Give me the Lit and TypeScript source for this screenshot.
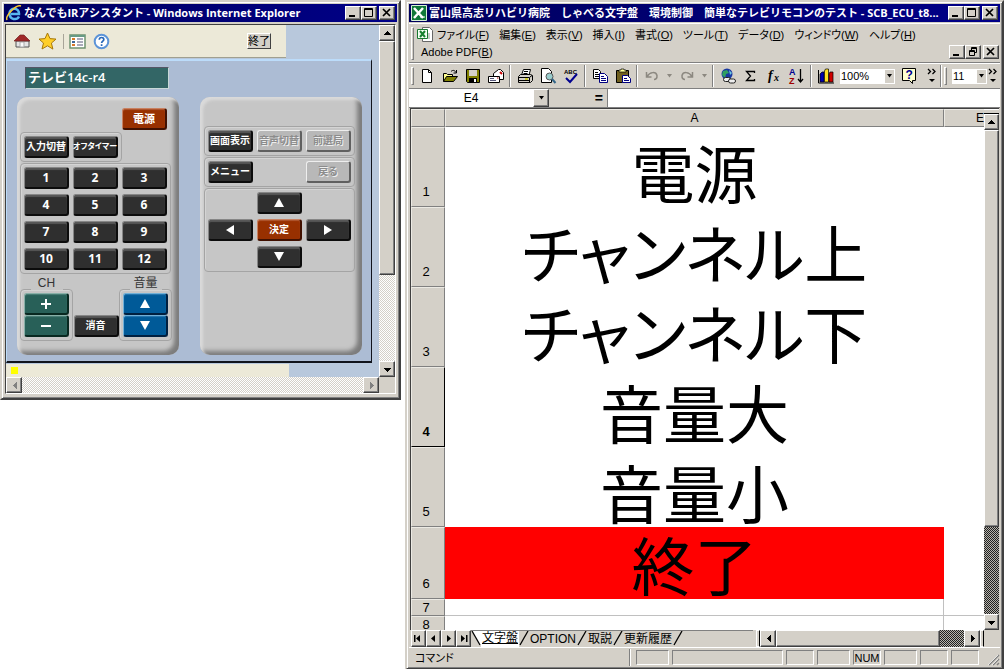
import { LitElement, html, css, svg, nothing } from "lit";
import { customElement, property } from "lit/decorators.js";
import { classMap } from "lit/directives/class-map.js";

const base = css`
  *, *::before, *::after { box-sizing: border-box; }
  button, input, select {
    font: inherit; color: inherit; margin: 0; padding: 0; border: 0;
    border-radius: 0; background: none; appearance: none; min-width: 0;
  }
  svg { display: block; flex: none; overflow: visible; }
  .raised {
    background: #d4d0c8; border: 1px solid; border-color: #fff #404040 #404040 #fff;
    box-shadow: inset -1px -1px #808080;
    display: flex; align-items: center; justify-content: center;
  }
`;

const arrow = (dir: string, color = "#000") => {
  const shapes: Record<string, string> = {
    up: "M4 2h1v1h1v1h1v1h1v1H1V5h1V4h1V3h1z",
    down: "M1 3h7v1H7v1H6v1H5v1H4V6H3V5H2V4H1z",
    left: "M3 4h1V3h1V2h1V1h1v7H6V7H5V6H4V5H3z",
    right: "M3 1h1v1h1v1h1v1h1v1H6v1H5v1H4v1H3z",
  };
  return html`<svg width="9" height="9" viewBox="0 0 9 9" shape-rendering="crispEdges"><path fill=${color} d=${shapes[dir]}/></svg>`;
};

/* ---------- window frame ---------- */
@customElement("classic-window")
class ClassicWindow extends LitElement {
  @property() heading = "";
  static styles = [base, css`
    :host {
      display: flex; flex-direction: column; min-width: 0; padding: 2px;
      background: #d4d0c8; border: 2px solid; border-color: #d4d0c8 #404040 #404040 #d4d0c8;
      box-shadow: inset 1px 1px #fff, inset -1px -1px #808080;
    }
    .bar {
      display: flex; align-items: center; height: 18px; padding: 0 2px; gap: 2px; flex: none;
      background: linear-gradient(90deg, #00005e, #000088); color: #fff;
    }
    .title {
      flex: 1; margin: 0; font: bold 11px/18px "Open Sans", "Noto Sans CJK JP", sans-serif;
      white-space: nowrap; overflow: hidden; text-overflow: ellipsis;
    }
    .controls { display: flex; }
    .controls button { width: 16px; height: 14px; }
    .controls .close { margin-left: 2px; }
    .body { flex: 1; display: flex; flex-direction: column; min-height: 0; margin-top: 1px; }
  `];
  render() {
    const s = (d: string) => html`<svg width="10" height="10" viewBox="0 0 10 10" fill="none" stroke="#000" stroke-width="2"><path d=${d}/></svg>`;
    return html`
      <div class="bar">
        <slot name="icon"></slot>
        <h1 class="title">${this.heading}</h1>
        <div class="controls">
          <button class="raised" aria-label="最小化">${s("M1 8h6")}</button>
          <button class="raised" aria-label="最大化"><svg width="10" height="10" viewBox="0 0 10 10" fill="none" stroke="#000"><path d="M.5 .5h8v8h-8zM.5 1.5h8"/></svg></button>
          <button class="raised close" aria-label="閉じる"><svg width="10" height="10" viewBox="0 0 10 10" fill="none" stroke="#000" stroke-width="1.7"><path d="M1 1l7 7M8 1l-7 7"/></svg></button>
        </div>
      </div>
      <div class="body"><slot></slot></div>`;
  }
}

/* ---------- scroll bar ---------- */
@customElement("scroll-bar")
class ScrollBar extends LitElement {
  @property({ type: Boolean, reflect: true }) horizontal = false;
  @property({ type: Boolean, reflect: true }) dark = false;
  @property({ type: Boolean }) disabled = false;
  @property({ type: Number }) thumb = 0;
  static styles = [base, css`
    :host { display: flex; flex-direction: column; width: 16px; flex: none; --a: #fff; --b: #d4d0c8; }
    :host([horizontal]) { flex-direction: row; width: auto; height: 16px; }
    :host([dark]) { --a: #b8b4ac; --b: #202020; }
    button { width: 100%; height: 16px; flex: none; }
    :host([horizontal]) button { width: 16px; height: 100%; }
    .track {
      flex: 1; display: flex; flex-direction: inherit; min-width: 0; min-height: 0;
      background: repeating-conic-gradient(var(--a) 0 25%, var(--b) 0 50%) 0 0 / 2px 2px;
    }
  `];
  render() {
    const color = this.disabled ? "#808080" : "#000";
    const [a, b] = this.horizontal ? ["left", "right"] : ["up", "down"];
    return html`
      <button class="raised" aria-label="戻る方向">${arrow(a, color)}</button>
      <div class="track">${this.thumb ? html`<div class="raised" style="flex: 0 0 ${this.thumb}%"></div>` : nothing}</div>
      <button class="raised" aria-label="進む方向">${arrow(b, color)}</button>`;
  }
}

/* ---------- remote control page ---------- */
@customElement("remote-control")
class RemoteControl extends LitElement {
  static styles = [base, css`
    :host {
      display: flex; flex-direction: column; flex: 1; margin: 1px 1px 2px;
      border: 1px solid; border-color: #404040 #fff #fff #404040;
      font-family: "Liberation Sans", "Noto Sans CJK JP", sans-serif; color: #fff;
    }
    .view { display: flex; }
    .page { flex: 1; background: #b8c8dc; min-width: 0; }
    .tools {
      display: flex; align-items: center; width: 280px; max-width: 100%; height: 33px; padding: 0 15px 0 7px; gap: 7px;
      background: #ece9d8; border-bottom: 1px solid #a0a090;
    }
    .tools button { display: flex; }
    .rule { width: 1px; height: 15px; background: #a8a498; margin: 0 -2px 0 -1px; }
    .tools .quit {
      margin-left: auto; width: 24px; height: 16px; background: #d4d0c8; color: #000; justify-content: center;
      border: 1px solid; border-color: #fff #404040 #404040 #fff; font-size: 11px; line-height: 14px;
    }
    .deck {
      margin: 1px 7px 1px 0; padding: 6px 9px 6px 10px; background: #acbcd4;
      border: 2px solid; border-width: 2px 1px 2px 1px; border-color: #bcdcfa #10141c #10141c #bcdcfa;
    }
    .lcd {
      display: block; width: 144px; height: 22px; margin: 0 0 8px 8px; padding-left: 2px; background: #336666;
      border: 1px solid #556; border-right-color: #c8d8d8; border-bottom-color: #c8d8d8;
      font: 600 13px/19px "Open Sans", "Noto Sans CJK JP", sans-serif;
    }
    .panels { display: flex; justify-content: space-between; }
    .panel {
      width: 162px; height: 258px; padding: 11px 7px 0 3px; border-radius: 10px; background: #c6c6c6;
      box-shadow: inset 3px 3px 3px #dadada, inset -5px -4px 4px #7c7c7c;
      display: flex; flex-direction: column; align-items: flex-start;
    }
    .panel.nav { padding-top: 29px; padding-left: 4px; }
    .box {
      display: grid; grid-template-columns: repeat(3, 45px); gap: 5px 4px; padding: 3px;
      border: 1px solid #a4a4a4; border-radius: 4px; box-shadow: inset 1px 1px #d4d4d4; margin-bottom: 1px;
    }
    .box.two { grid-template-columns: repeat(2, 45px); }
    .box.one { grid-template-columns: 45px; gap: 0; margin: 0; }
    .key {
      height: 22px; border-radius: 3px; background: #2f2f2f; font-weight: bold; font-size: 10px; line-height: 18px;
      border: 1px solid #222; border-width: 1px 2px 2px 1px; border-color: #868686 #0c0c0c #0c0c0c #868686;
      box-shadow: inset 0 2px 1px #585858; white-space: nowrap; width: 45px;
      display: flex; align-items: center; justify-content: center;
    }
    .digit { font: bold 12px/18px "Noto Sans", sans-serif; }
    .tiny { font-size: 8px; font-feature-settings: "palt"; }
    .red { background: #983000; border-color: #c88060 #401000 #401000 #c88060; box-shadow: inset 0 1px 1px #b05830; }
    .power { margin: 0 0 2px 102px; font-size: 11px; }
    .green { background: #286058; border-color: #88b0a8 #082820 #082820 #88b0a8; box-shadow: inset 0 1px 1px #4c8078; }
    .blue { background: #005a98; border-color: #70b0d8 #002040 #002040 #70b0d8; box-shadow: inset 0 1px 1px #2878b0; }
    .key:disabled {
      background: #b8b8b8; color: #8c8c8c; text-shadow: 1px 1px #eee;
      border-color: #eee #606060 #606060 #eee; box-shadow: none;
    }
    .col1 { grid-column: 1; } .col2 { grid-column: 2; } .col3 { grid-column: 3; }
    .bottom { display: flex; align-items: flex-end; justify-content: space-between; align-self: stretch; margin-top: 1px; }
    .bottom > .key { margin-bottom: 4px; margin-inline: -3px; }
    .caption {
      width: 32px; margin: 0 auto -1px; background: #c6c6c6; color: #333; text-align: center;
      font-size: 12px; line-height: 14px; position: relative;
    }
    .foot { width: 76%; height: 13px; background: #ece9d8; padding: 3px 5px; }
    .lamp { width: 7px; height: 7px; background: #ff0; }
    .base { display: flex; background: #d4d0c8; }
    .base scroll-bar { flex: 1; }
    .corner { width: 16px; }
  `];
  render() {
    const key = (label: unknown, cls = "", disabled = false, name = "") =>
      html`<button class="key ${cls}" ?disabled=${disabled} aria-label=${name || nothing}>${label}</button>`;
    const tri = (d: string) => svg`<svg width="12" height="11" viewBox="0 0 12 11" fill="#fff"><path d=${d}/></svg>`;
    const up = tri("M6 1l5 9H1z"), down = tri("M6 10l5-9H1z");
    const left = tri("M2 6l8-5v10z"), right = tri("M10 6L2 1v10z");
    return html`
      <div class="view">
        <div class="page">
          <div class="tools">
            <button aria-label="ホーム"><svg width="18" height="18" viewBox="0 0 18 18"><path d="M3 9h13v6H3z" fill="#e4e4e4" stroke="#555"/><path d="M7 10h4v5H7z" fill="#fafafa" stroke="#aaa"/><path d="M1 9l6-6h4l6 6z" fill="#a02828" stroke="#702020" stroke-width=".7"/></svg></button>
            <button aria-label="お気に入り"><svg width="19" height="18" viewBox="0 0 19 18"><path d="M9.5 1l2.5 5.6 6 .5-4.6 4 1.5 6-5.4-3.3L4 17l1.500-6L1 7.100l6-.5z" fill="#ffcf28" stroke="#a87808"/></svg></button>
            <span class="rule"></span>
            <button aria-label="一覧"><svg width="17" height="16" viewBox="0 0 17 16"><path d="M1 2h15v13H1z" fill="#fff" stroke="#6f9270" stroke-width="1.500"/><path d="M1 2h15v2H1z" fill="#699a85"/><path d="M3 6h3M3 12h3" stroke="#d87828" stroke-width="2"/><path d="M3 9h3" stroke="#406898" stroke-width="2"/><path d="M8 6h6M8 9h6M8 12h6" stroke="#557"/></svg></button>
            <button aria-label="ヘルプ"><svg width="17" height="17" viewBox="0 0 17 17"><circle cx="8.500" cy="8.500" r="6.800" fill="#fff" stroke="#5c94d8" stroke-width="2"/><path d="M6.300 6.700c0-3 4.600-2.800 4.500-.2 0 1.600-2.200 1.800-2.200 3.600M8.600 11.200v1.700" fill="none" stroke="#2868b8" stroke-width="1.700"/></svg></button>
            <button class="quit">終了</button>
          </div>
          <div class="deck">
            <output class="lcd">テレビ14c-r4</output>
            <div class="panels">
              <div class="panel">
                ${key("電源", "red power")}
                <div class="box two">${key("入力切替")}${key("オフタイマー", "tiny")}</div>
                <div class="box">${Array.from({ length: 12 }, (_, i) => key(i + 1, "digit"))}</div>
                <div class="bottom">
                  <div><div class="caption">CH</div><div class="box one">
                    ${key(svg`<svg width="12" height="12" viewBox="0 0 12 12" stroke="#fff" stroke-width="2"><path d="M6 1v10M1 6h10"/></svg>`, "green", false, "チャンネル上")}
                    ${key(svg`<svg width="12" height="12" viewBox="0 0 12 12" stroke="#fff" stroke-width="2"><path d="M1 6h10"/></svg>`, "green", false, "チャンネル下")}
                  </div></div>
                  ${key("消音")}
                  <div><div class="caption">音量</div><div class="box one">
                    ${key(up, "blue", false, "音量大")}${key(down, "blue", false, "音量小")}
                  </div></div>
                </div>
              </div>
              <div class="panel nav">
                <div class="box">${key("画面表示")}${key("音声切替", "", true)}${key("前選局", "", true)}</div>
                <div class="box">${key("メニュー", "col1")}${key("戻る", "col3", true)}</div>
                <div class="box">
                  ${key(up, "col2", false, "上")}
                  ${key(left, "col1", false, "左")}${key("決定", "red")}${key(right, "", false, "右")}
                  ${key(down, "col2", false, "下")}
                </div>
              </div>
            </div>
          </div>
          <div class="foot"><div class="lamp"></div></div>
        </div>
        <scroll-bar .thumb=${73}></scroll-bar>
      </div>
      <div class="base"><scroll-bar horizontal disabled></scroll-bar><span class="corner"></span></div>`;
  }
}

/* ---------- spreadsheet ---------- */
const I = (body: unknown, w = 16) => html`<svg width=${w} height="16" viewBox="0 0 ${w} 16">${body}</svg>`;
const icons = {
  blank: svg`<path d="M3.500 1.500h6l3 3v10h-9z" fill="#fff" stroke="#000"/><path d="M9.500 1.500v3h3" fill="none" stroke="#000"/>`,
  open: svg`<path d="M1.500 13.500v-8h3l1 1h5v2" fill="#ffff90" stroke="#000"/><path d="M1.500 13.500l3-5h11l-4 5z" fill="#808000" stroke="#000"/><path d="M9 3.500c2-2 4-1 5 1M14.500 2v3h-3" fill="none" stroke="#000"/>`,
  save: svg`<path d="M1.500 1.500h13v13h-12l-1-1z" fill="#808000" stroke="#000"/><path d="M4 2h8v6H4z" fill="#d4d0c8"/><path d="M4 10h8v5H4z" fill="#000"/><path d="M9 11h2v3H9z" fill="#fff"/>`,
  mail: svg`<path d="M5.500 5.500l5-4h2l3 3v7h-10z" fill="#fff" stroke="#000"/><path d="M12 4l2 2" stroke="#c00" stroke-width="2"/><path d="M.5 8.500h11v6H.5z" fill="#fff" stroke="#000"/><path d="M2 10.500h4M2 12.500h6" stroke="#557"/><path d="M9 10h1.500" stroke="#a00"/>`,
  print: svg`<path d="M4.500 7l2-5.500h7L12 7" fill="#fff" stroke="#000"/><path d="M7 3.500h4M6.500 5.500h4" stroke="#000"/><path d="M1.500 8.500l2-2h10l2 1v5l-2 2h-12z" fill="#d4d0c8" stroke="#000"/><path d="M1.500 9.500h11v5M2 12.500h10M13 9l2-1.500" fill="none" stroke="#000"/><path d="M8 11h3" stroke="#cc0" stroke-width="1.500"/>`,
  preview: svg`<path d="M1.500.5h7l3 3v11h-10z" fill="#fff" stroke="#000"/><circle cx="9.500" cy="8.500" r="3.500" fill="#9cc" stroke="#555"/><path d="M12 11l3.500 4" stroke="#368" stroke-width="2"/>`,
  spell: svg`<text x="1" y="6" font-size="6" font-weight="bold" font-family="Liberation Sans">ABC</text><path d="M3 10l4 4 7-8" fill="none" stroke="#000090" stroke-width="2"/>`,
  copy: svg`<path d="M1.500 1.500h5l2 2v7h-7z" fill="#fff" stroke="#000"/><path d="M3 4.500h3M3 6.500h4M3 8.500h4" stroke="#000"/><path d="M7.500 5.500h5l3 3v6h-8z" fill="#fff" stroke="#000080"/><path d="M9 8.500h3M9 10.500h5M9 12.500h5" stroke="#000080"/>`,
  paste: svg`<path d="M1.500 2.500h12v12h-12z" fill="#706020" stroke="#000"/><path d="M4 4V2h2V1h3v1h2v2z" fill="#ff9" stroke="#000" stroke-width=".7"/><path d="M7.500 7.500h5l3 3v4h-8z" fill="#fff" stroke="#000080"/><path d="M9 10.500h3M9 12.500h5" stroke="#000080"/>`,
  undo: svg`<path d="M2.500 4v5h5M3 8.500c3-5 9-5 10-1 .3 3-1.500 4-3 4" fill="none" stroke="#8c8880" stroke-width="1.500"/>`,
  redo: svg`<path d="M13.500 4v5h-5M13 8.500c-3-5-9-5-10-1-.3 3 1.500 4 3 4" fill="none" stroke="#8c8880" stroke-width="1.500"/>`,
  globe: svg`<circle cx="7" cy="6" r="5.500" fill="#1838a0"/><path d="M3 3l4-1 2 3-3 1-1 4-3-3z" fill="#30a060"/><path d="M9 2l3 3-2 2z" fill="#70c8e0"/><rect x="3.500" y="9.500" width="7" height="4" rx="2" fill="#eee" stroke="#222"/><rect x="8.500" y="11" width="7" height="4" rx="2" fill="#eee" stroke="#222"/>`,
  sum: svg`<path d="M11.500 5V3.500h-8L7.500 8l-4 4.500h8V11" fill="none" stroke="#000" stroke-width="1.300"/>`,
  fx: svg`<text x="2" y="12" font-size="14" font-weight="bold" font-style="italic" font-family="Liberation Serif">f</text><text x="8" y="13" font-size="10" font-weight="bold" font-style="italic" font-family="Liberation Serif">x</text>`,
  sort: svg`<text x="0" y="7" font-size="9" font-weight="bold" fill="#000090" font-family="Liberation Sans">A</text><text x="0" y="16" font-size="9" font-weight="bold" fill="#a00000" font-family="Liberation Sans">Z</text><path d="M11.500 1v13M9 11l2.500 3 2.500-3" fill="none" stroke="#000" stroke-width="1.300"/>`,
  chart: svg`<path d="M.5 2v13H16" fill="none" stroke="#000"/><path d="M2 6l2-2h2v10H2z" fill="#0000b0" stroke="#000" stroke-width=".7"/><path d="M6.500 3l1-2h3v13h-4z" fill="#ffe020" stroke="#000" stroke-width=".7"/><path d="M11 6l1-2h3v10h-4z" fill="#d00000" stroke="#000" stroke-width=".7"/>`,
  help: svg`<path d="M1.500 .5h13v12h-3v3l-3-3h-7z" fill="#ffffd0" stroke="#000"/><text x="4.500" y="11" font-size="12" font-weight="bold" fill="#000090" font-family="Liberation Sans">?</text>`,
};

const rows = [
  ["1", "電源", 80], ["2", "チャンネル上", 80], ["3", "チャンネル下", 80],
  ["4", "音量大", 80], ["5", "音量小", 80], ["6", "終了", 72], ["7", "", 17], ["8", "", 17],
] as const;

@customElement("spread-sheet")
class SpreadSheet extends LitElement {
  static styles = [base, css`
    :host {
      display: flex; flex-direction: column; flex: 1; min-height: 0; color: #000;
      font: 12px/16px "Liberation Sans", "Noto Sans CJK JP", sans-serif;
    }
    .menu { display: flex; padding: 2px 1px 1px 2px; border-top: 1px solid #fff; border-bottom: 1px solid #808080; height: 40px; }
    .grip { width: 3px; flex: none; border: 1px solid; border-color: #fff #808080 #808080 #fff; margin: 1px 0; }
    .lines { flex: 1; display: flex; flex-direction: column; justify-content: space-between; padding-left: 3px; min-width: 0; }
    .line { display: flex; align-items: center; height: 18px; font-size: 11px; font-feature-settings: "palt"; white-space: nowrap; }
    .items { display: flex; gap: 10px; padding-left: 4px; }
    .doc { margin-left: auto; display: flex; }
    .doc .raised { width: 16px; height: 14px; }
    .doc .raised:last-child { margin-left: 2px; }
    .toolbar { display: flex; align-items: center; height: 26px; padding: 0 1px 0 2px; border-top: 1px solid #fff; border-bottom: 1px solid #808080; }
    .toolbar .grip { align-self: stretch; margin: 3px 1px 3px 0; }
    .tool { width: 23px; height: 22px; display: flex; align-items: center; justify-content: center; flex: none; }
    .drop { width: 12px; display: flex; justify-content: center; flex: none; }
    .sep { width: 2px; height: 22px; margin: 0 2px; border-left: 1px solid #808080; border-right: 1px solid #fff; flex: none; }
    .combo { display: grid; grid-template-columns: 1fr 11px; width: 55px; height: 15px; background: #fff; margin: 0 2px 0 3px; flex: none; font-size: 11px; }
    .combo.small { width: 35px; margin: 0 0 0 4px; }
    .combo select { grid-area: 1 / 1 / 2 / 3; padding-left: 1px; line-height: 15px; }
    .combo span { grid-area: 1 / 2; background: #d4d0c8; border: 1px solid #fff; display: flex; align-items: center; justify-content: center; pointer-events: none; }
    .push { flex: 1; }
    .more { width: 12px; flex: none; display: flex; justify-content: center; }
    .formula { display: flex; height: 19px; border-bottom: 1px solid #808080; }
    .name { width: 124px; text-align: center; background: #fff; }
    .formula .raised { width: 16px; flex: none; }
    .eq { width: 59px; padding-right: 4px; text-align: right; font-weight: bold; line-height: 18px; border-right: 1px solid #808080; font-size: 14px; flex: none; }
    .fx { flex: 1; background: #fff; }
    .work { flex: 1; display: flex; min-height: 0; margin: 0 1px; border: 1px solid #404040; border-width: 1px 0 0 1px; background: #fff; }
    .sheet { flex: 1 1 0; overflow: hidden; min-width: 0; height: 521px; }
    table { table-layout: fixed; border-collapse: separate; border-spacing: 0; width: calc(100% + 32px); }
    th, td { padding: 0; font-weight: normal; }
    th { background: #d4d0c8; border: 1px solid; border-color: #eceae4 #808080 #808080 #eceae4; }
    thead th { height: 18px; line-height: 16px; font-size: 12px; }
    .num { width: 34px; }
    .extra { width: 72px; }
    tbody th { vertical-align: bottom; line-height: 28px; font-size: 13px; padding-right: 4px; }
    tbody th.low { line-height: 15px; }
    tbody .current { font-weight: bold; border-right-color: #000; border-bottom-color: #000; }
    td.big { vertical-align: bottom; text-align: center; font: 400 63px/72px "Noto Sans CJK JP", sans-serif; font-feature-settings: "palt"; white-space: nowrap; }
    .end { background: #f00; }
    td.lined { border-bottom: 1px solid #c0c0c0; }
    td.lined:nth-child(2) { border-right: 1px solid #c0c0c0; }
    .side { display: flex; flex-direction: column; width: 15px; flex: none; background: #d4d0c8; }
    .split { height: 5px; border-top: 1px solid #fff; border-bottom: 1px solid #000; flex: none; }
    .side scroll-bar { flex: 1; width: 15px; }
    .tabs { display: flex; height: 17px; margin-left: 2px; flex: none; }
    .tabs .raised { width: 15px; }
    .strip { flex: 1; display: flex; min-width: 0; border-top: 1px solid #808080; overflow: hidden; margin-right: 3px; }
    .tab { padding: 0 1px; white-space: nowrap; line-height: 15px; font-size: 12px; }
    .tab.active { background: #fff; text-decoration: underline; margin-top: -1px; }
    .hbar { flex: 0 0 228px; display: flex; }
    .hbar scroll-bar { flex: 1; height: auto; }
    .knob { width: 4px; border: 1px solid; border-color: #fff #000 #fff #fff; }
    .corner { width: 16px; flex: none; }
    .status { display: flex; align-items: center; gap: 3px; height: 19px; padding: 1px 0 0 6px; border-top: 1px solid #fff; flex: none; }
    .message { flex: 1; font-size: 11px; font-feature-settings: "palt"; }
    .cell { width: 28px; height: 15px; border: 1px solid; border-color: #808080 #fff #fff #808080; line-height: 14px; text-align: center; flex: none; font-size: 11px; }
    .cell.mid { width: 33px; } .cell.wide { width: 111px; }
    .status .sep { height: 17px; }
  `];
  render() {
    const menus = [["ファイル", "F"], ["編集", "E"], ["表示", "V"], ["挿入", "I"], ["書式", "O"], ["ツール", "T"], ["データ", "D"], ["ウィンドウ", "W"], ["ヘルプ", "H"]];
    const menuItem = ([t, k]: string[]) => html`<button>${t}(<u>${k}</u>)</button>`;
    const tool = (n: keyof typeof icons) => html`<button class="tool" aria-label=${n}>${I(icons[n])}</button>`;
    const small = (c = "#000") => html`<svg width="7" height="4" viewBox="0 0 7 4"><path d="M1 0h5L3.500 3.500z" fill=${c}/></svg>`;
    const chevrons = html`<button class="more" aria-label="その他"><svg width="10" height="16" viewBox="0 0 10 16" fill="none" stroke="#000" stroke-width="1.300"><path d="M1 1l2.500 2.500L1 6M5.500 1L8 3.500 5.500 6"/><path d="M2 11h6L5 14z" fill="#000" stroke="none"/></svg></button>`;
    const sep = html`<span class="sep"></span>`;
    const slash = (first = false) => html`<svg width="10" height="15" viewBox="0 0 10 15"><path d=${first ? "M1 0l8 14h1V0z" : "M0 14L8 0H0z"} fill=${first ? "#fff" : "none"}/><path d=${first ? "M1 0l8 14" : "M1 14L9 0"} stroke="#000" stroke-width="1.300"/></svg>`;
    const nav = (d: string) => html`<button class="raised" aria-label="シート移動"><svg width="9" height="9" viewBox="0 0 9 9"><path d=${d}/></svg></button>`;
    return html`
      <div class="menu">
        <span class="grip"></span>
        <div class="lines">
          <div class="line">
            <svg width="16" height="16" viewBox="0 0 16 16"><path d="M5.500.5h7l3 3v11h-10z" fill="#fff" stroke="#666"/><path d="M.5 2.500h10v9H.5z" fill="#f4fff4" stroke="#187830"/><path d="M3 4l5 6M8 4l-5 6" stroke="#188030" stroke-width="2"/><path d="M12 6v6" stroke="#999"/></svg>
            <nav class="items">${menus.map(menuItem)}</nav>
          </div>
          <div class="line">
            <span class="items adobe"><button>Adobe PDF(<u>B</u>)</button></span>
            <span class="doc">
              <button class="raised" aria-label="ブックを最小化"><svg width="10" height="10" viewBox="0 0 10 10"><path d="M1 7h6v2H1z"/></svg></button>
              <button class="raised" aria-label="ブックを元に戻す"><svg width="10" height="10" viewBox="0 0 10 10" fill="none" stroke="#000"><path d="M3.500 3V.5h5v5H7M3 1.500h6M1.500 3.500h5v5h-5zM1 4.500h6"/></svg></button>
              <button class="raised" aria-label="ブックを閉じる"><svg width="10" height="10" viewBox="0 0 10 10" stroke="#000" stroke-width="1.700"><path d="M1 1l7 7M8 1l-7 7"/></svg></button>
            </span>
          </div>
        </div>
      </div>
      <div class="toolbar">
        <span class="grip"></span>
        ${tool("blank")}${tool("open")}${tool("save")}${tool("mail")}${sep}
        ${tool("print")}${tool("preview")}${tool("spell")}${sep}
        ${tool("copy")}${tool("paste")}${sep}
        ${tool("undo")}<span class="drop">${small("#8c8880")}</span>${tool("redo")}<span class="drop">${small("#8c8880")}</span>${sep}
        ${tool("globe")}${tool("sum")}${tool("fx")}${tool("sort")}${sep}${tool("chart")}
        <label class="combo"><select aria-label="ズーム"><option>100%</option></select><span>${small()}</span></label>
        ${tool("help")}<span class="push"></span>${chevrons}
        ${sep}<span class="grip"></span>
        <label class="combo small"><select aria-label="フォント サイズ"><option>11</option></select><span>${small()}</span></label>
        ${chevrons}
      </div>
      <div class="formula">
        <input class="name" aria-label="名前ボックス" .value=${"E4"} />
        <button class="raised" aria-label="名前の一覧">${small()}</button>
        <span class="eq">=</span>
        <input class="fx" aria-label="数式" />
      </div>
      <div class="work">
        <div class="sheet">
          <table>
            <thead><tr><th class="num"></th><th scope="col">A</th><th class="extra" scope="col">E</th></tr></thead>
            <tbody>${rows.map(([n, text, h]) => html`
              <tr style="height: ${h}px">
                <th scope="row" class=${classMap({ current: n === "4", low: !text })}>${n}</th>
                <td class=${classMap({ big: !!text, end: n === "6", lined: !text })}>${text}</td>
                <td class=${classMap({ lined: !text })}></td>
              </tr>`)}</tbody>
          </table>
        </div>
        <div class="side"><span class="split"></span><scroll-bar dark .thumb=${82}></scroll-bar></div>
      </div>
      <div class="tabs">
        ${nav("M0 1h1.500v7H0zM6 1v7L2 4.500z")}${nav("M6 1v7L2 4.500z")}${nav("M3 1v7l4-3.500z")}${nav("M2 1v7l4-3.500zM7 1h1.500v7H7z")}
        <div class="strip">
          ${slash(true)}<button class="tab active">文字盤</button>${slash()}<button class="tab">OPTION</button>${slash()}<button class="tab">取説</button>${slash()}<button class="tab">更新履歴</button>${slash()}
        </div>
        <div class="hbar"><span class="knob"></span><scroll-bar horizontal dark .thumb=${87}></scroll-bar><span class="knob"></span></div>
        <span class="corner"></span>
      </div>
      <div class="status">
        <span class="message">コマンド</span>${sep}
        <span class="cell mid"></span><span class="cell wide"></span><span class="cell"></span><span class="cell mid"></span>
        <span class="cell">NUM</span><span class="cell mid"></span><span class="cell"></span><span class="cell"></span>
        <svg width="18" height="16" viewBox="0 0 18 16"><path d="M7 15L17 5M11 15l6-6M15 15l2-2" stroke="#808080" stroke-width="1.500"/><path d="M6 15L16 5M10 15l6-6" stroke="#fff" stroke-width=".7"/></svg>
      </div>`;
  }
}

@customElement("app-root")
class AppRoot extends LitElement {
  static styles = css`
    :host {
      display: grid; grid-template-columns: minmax(401px, 2fr) minmax(0, 3fr); gap: 4px; align-items: start;
      min-height: 100vh; background: #fff;
    }
    .office { min-height: 100vh; box-sizing: border-box; }
    .browser { box-sizing: border-box; }
    svg { display: block; flex: none; }
  `;
  render() {
    return html`
      <classic-window class="browser" heading="なんでもIRアシスタント - Windows Internet Explorer">
        <svg slot="icon" width="16" height="16" viewBox="0 0 16 16"><path d="M13 11.500c-2 4-9.500 3.500-9.500-3 0-6.500 10-6.500 9.500.5H5" fill="none" stroke="#58b8f0" stroke-width="2.500"/><path d="M1 15C-1 11 10-1 15 1" fill="none" stroke="#f8c830" stroke-width="1.500"/></svg>
        <remote-control></remote-control>
      </classic-window>
      <classic-window class="office" heading="富山県高志リハビリ病院　しゃべる文字盤　環境制御　簡単なテレビリモコンのテスト - SCB_ECU_t8...">
        <svg slot="icon" width="16" height="16" viewBox="0 0 16 16"><path d="M.5.5h15v15H.5z" fill="#107838" stroke="#d8f0d8"/><path d="M3 3l9 10M12 3L3 13" stroke="#fff" stroke-width="2.500"/><path d="M9 12h5" stroke="#fff"/></svg>
        <spread-sheet></spread-sheet>
      </classic-window>`;
  }
}
